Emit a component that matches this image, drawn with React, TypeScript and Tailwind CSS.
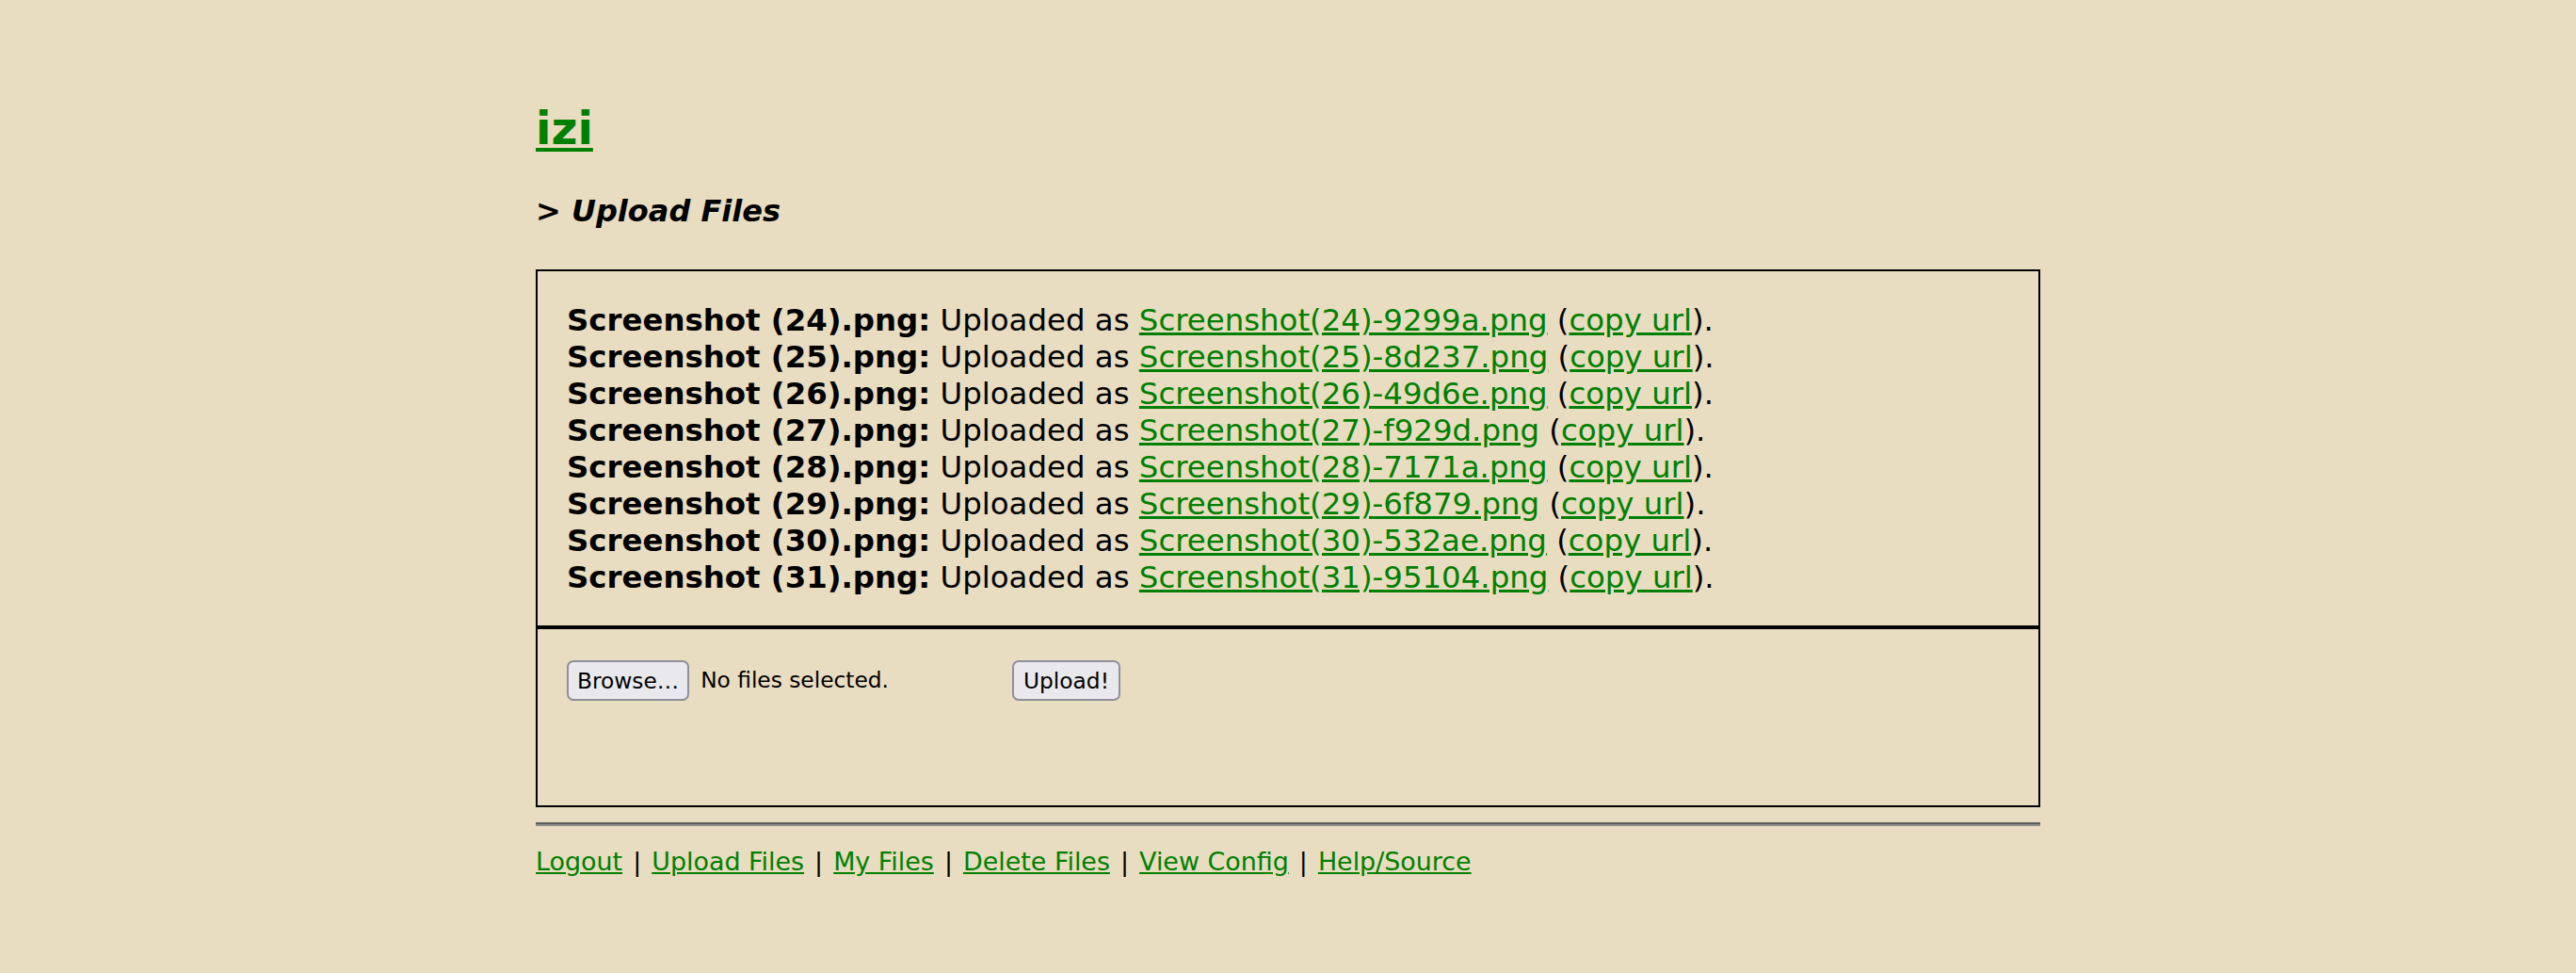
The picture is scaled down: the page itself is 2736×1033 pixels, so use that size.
const FONT = "font-['DejaVu_Sans',Verdana,sans-serif]"

const UPLOADS = [
  ['Screenshot (24).png', 'Screenshot(24)-9299a.png'],
  ['Screenshot (25).png', 'Screenshot(25)-8d237.png'],
  ['Screenshot (26).png', 'Screenshot(26)-49d6e.png'],
  ['Screenshot (27).png', 'Screenshot(27)-f929d.png'],
  ['Screenshot (28).png', 'Screenshot(28)-7171a.png'],
  ['Screenshot (29).png', 'Screenshot(29)-6f879.png'],
  ['Screenshot (30).png', 'Screenshot(30)-532ae.png'],
  ['Screenshot (31).png', 'Screenshot(31)-95104.png'],
]

const NAV = ['Logout', 'Upload Files', 'My Files', 'Delete Files', 'View Config', 'Help/Source']

const LINK = 'text-[#008000] underline'
const BTN = 'h-[43px] px-[9px] border-2 border-[#8f8f9d] bg-[#e9e9ed] rounded-[7px] text-[23.3px] leading-[27px] text-black'

export default function App() {
  return (
    <div className={`min-h-[1033px] bg-[#e8dcc1] text-black ${FONT}`}>
      <div className="mx-auto w-[1598px] pt-[108px]">
        <h1 className="text-[48px] leading-[56px] font-bold">
          <a href="#" className={`${LINK} decoration-[4px] underline-offset-[4px]`}>izi</a>
        </h1>

        <h2 className="mt-[42px] text-[32px] leading-[37px] font-bold italic">&gt; Upload Files</h2>

        <div className="mt-[43px]">
          {/* upload results */}
          <div className="border-2 border-black px-[31px] pt-[33px] pb-[31px] text-[32.4px] leading-[39px]">
            {UPLOADS.map(([orig, saved]) => (
              <div key={orig} className="whitespace-nowrap">
                <b>{orig}:</b> Uploaded as <a href="#" className={LINK}>{saved}</a> (<a href="#" className={LINK}>copy url</a>).
              </div>
            ))}
          </div>

          {/* upload form */}
          <div className="h-[191px] border-2 border-black px-[31px] pt-[33px]">
            <div className="flex items-center">
              <div className="flex items-center w-[473px]">
                <button className={BTN}>Browse…</button>
                <span className="ml-[12px] text-[23.3px]">No files selected.</span>
              </div>
              <button className={`${BTN} px-[10px]`}>Upload!</button>
            </div>
          </div>
        </div>

        <div className="mt-[16px] border-t-2 border-b-2 border-t-[#5f5f5f] border-b-[#8c8c8c]" />

        <div className="mt-[23px] text-[26.9px] leading-[30px] whitespace-nowrap">
          {NAV.map((n, i) => (
            <span key={n}>
              {i > 0 && <span className="mx-[2.5px]"> | </span>}
              <a href="#" className={LINK}>{n}</a>
            </span>
          ))}
        </div>
      </div>
    </div>
  )
}
